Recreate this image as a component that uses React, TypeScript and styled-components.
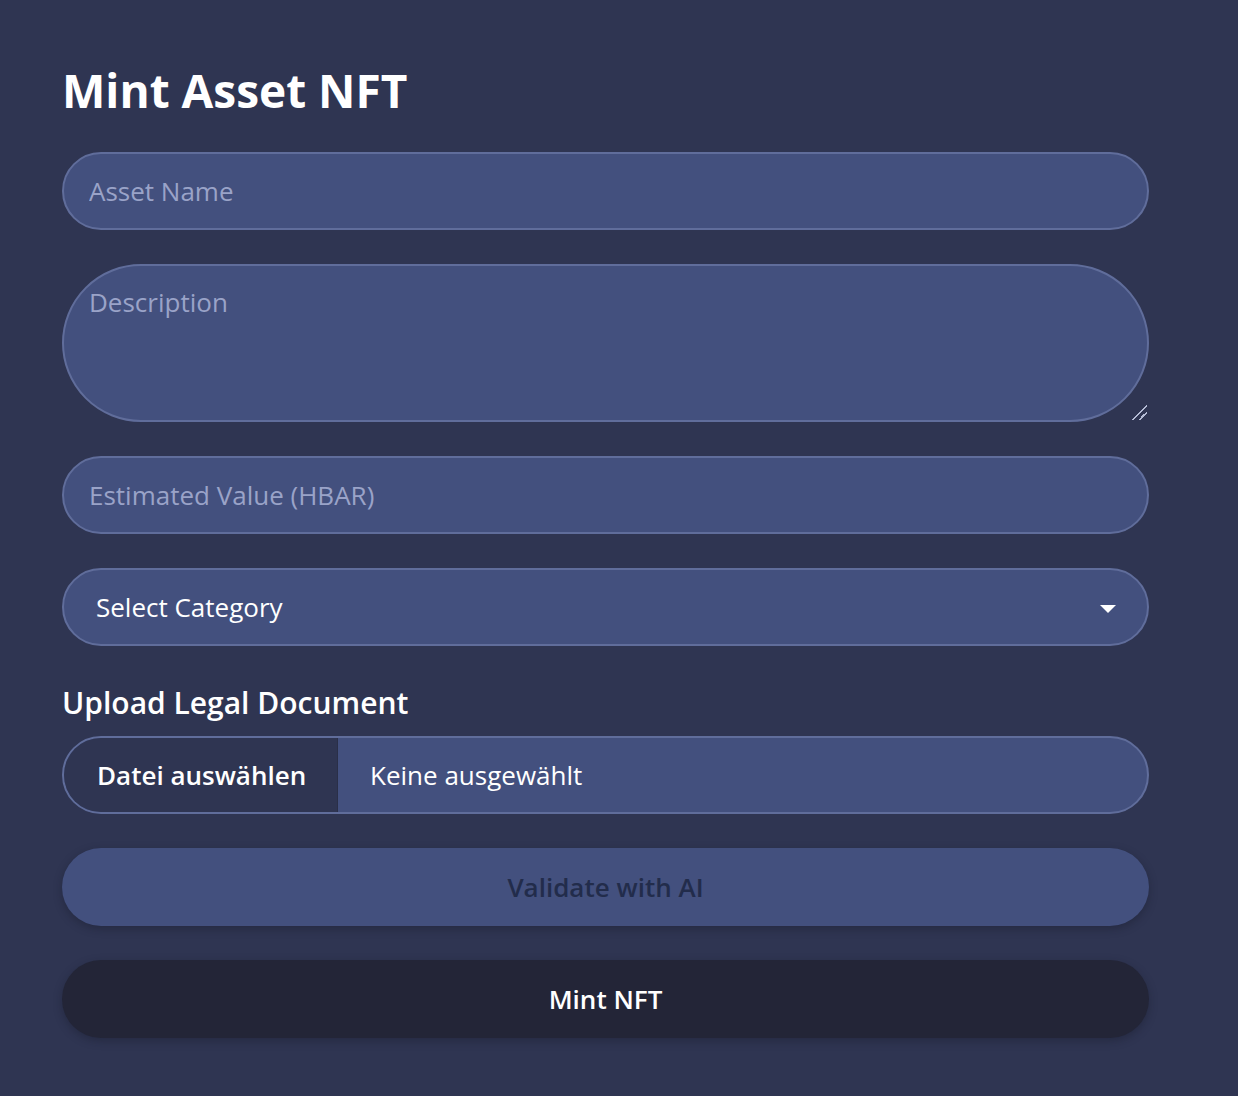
import React from "react";
import styled, { createGlobalStyle } from "styled-components";

const Global = createGlobalStyle`
  html, body {
    margin: 0;
    padding: 0;
    background: #2f3552;
  }
  body {
    font-family: "Open Sans", "Noto Sans", sans-serif;
  }
`;

const Page = styled.div`
  min-height: 1096px;
  background: #2f3552;
  padding: 58px 0 0 62px;
  box-sizing: border-box;
`;

const Form = styled.form`
  width: 1087px;
  display: flex;
  flex-direction: column;
  gap: 34px;
`;

const Title = styled.h1`
  margin: 0 0 -4px 0;
  font-size: 46px;
  line-height: 64px;
  font-weight: 700;
  color: #ffffff;
`;

const fieldBase = `
  box-sizing: border-box;
  width: 100%;
  border: 2px solid #606d9b;
  background: #43507e;
  border-radius: 9999px;
  font-family: "Open Sans", "Noto Sans", sans-serif;
  font-size: 26px;
  color: #ffffff;
  outline: none;
`;

const Input = styled.input`
  ${fieldBase}
  height: 78px;
  padding: 0 25px;
  &::placeholder {
    color: #9aa3c8;
  }
`;

const TextArea = styled.textarea`
  ${fieldBase}
  height: 158px;
  padding: 18px 25px;
  line-height: 36px;
  resize: vertical;
  &::placeholder {
    color: #9aa3c8;
  }
  &::-webkit-scrollbar {
    width: 0;
    height: 0;
  }
  &::-webkit-resizer {
    background: linear-gradient(
      135deg,
      transparent 0 48%,
      #b4bbd4 48% 56%,
      transparent 56% 70%,
      #b4bbd4 70% 78%,
      transparent 78%
    );
  }
`;

const SelectWrap = styled.div`
  position: relative;
  width: 100%;
`;

const Select = styled.select`
  ${fieldBase}
  height: 78px;
  padding: 0 32px;
  appearance: none;
  -webkit-appearance: none;
`;

const Arrow = styled.svg`
  position: absolute;
  right: 33px;
  top: 37px;
  width: 16px;
  height: 8px;
  pointer-events: none;
`;

const Label = styled.div`
  margin-bottom: -24px;
  font-size: 30px;
  line-height: 46px;
  font-weight: 600;
  color: #ffffff;
`;

const FileRow = styled.label`
  box-sizing: border-box;
  display: flex;
  align-items: stretch;
  height: 78px;
  border: 2px solid #606d9b;
  border-radius: 9999px;
  overflow: hidden;
  background: #43507e;
  cursor: pointer;
`;

const FileButton = styled.span`
  display: flex;
  align-items: center;
  width: 274px;
  padding-left: 33px;
  box-sizing: border-box;
  background: #2f3552;
  border-right: 1px solid #2a2f48;
  font-size: 26px;
  font-weight: 600;
  color: #ffffff;
`;

const FileName = styled.span`
  display: flex;
  align-items: center;
  padding-left: 32px;
  font-size: 26px;
  color: #ffffff;
`;

const Button = styled.button<{ $variant: "soft" | "dark" }>`
  box-sizing: border-box;
  height: 78px;
  width: 100%;
  border: none;
  border-radius: 9999px;
  font-family: "Open Sans", "Noto Sans", sans-serif;
  font-size: 26px;
  font-weight: 600;
  cursor: pointer;
  background: ${(p) => (p.$variant === "soft" ? "#43507e" : "#232537")};
  color: ${(p) => (p.$variant === "soft" ? "#222c4b" : "#ffffff")};
  box-shadow: 0 3px 8px rgba(20, 22, 38, 0.35);
`;

export default function App() {
  return (
    <Page>
      <Global />
      <Form onSubmit={(e) => e.preventDefault()}>
        <Title>Mint Asset NFT</Title>
        <Input placeholder="Asset Name" />
        <TextArea placeholder="Description" />
        <Input placeholder="Estimated Value (HBAR)" />
        <SelectWrap>
          <Select defaultValue="">
            <option value="">Select Category</option>
            <option value="real-estate">Real Estate</option>
            <option value="art">Art</option>
          </Select>
          <Arrow viewBox="0 0 16 8">
            <path d="M0 0 L16 0 L8 8 Z" fill="#ffffff" />
          </Arrow>
        </SelectWrap>
        <Label>Upload Legal Document</Label>
        <FileRow>
          <FileButton>Datei auswählen</FileButton>
          <FileName>Keine ausgewählt</FileName>
        </FileRow>
        <Button type="button" $variant="soft">Validate with AI</Button>
        <Button type="submit" $variant="dark">Mint NFT</Button>
      </Form>
    </Page>
  );
}
